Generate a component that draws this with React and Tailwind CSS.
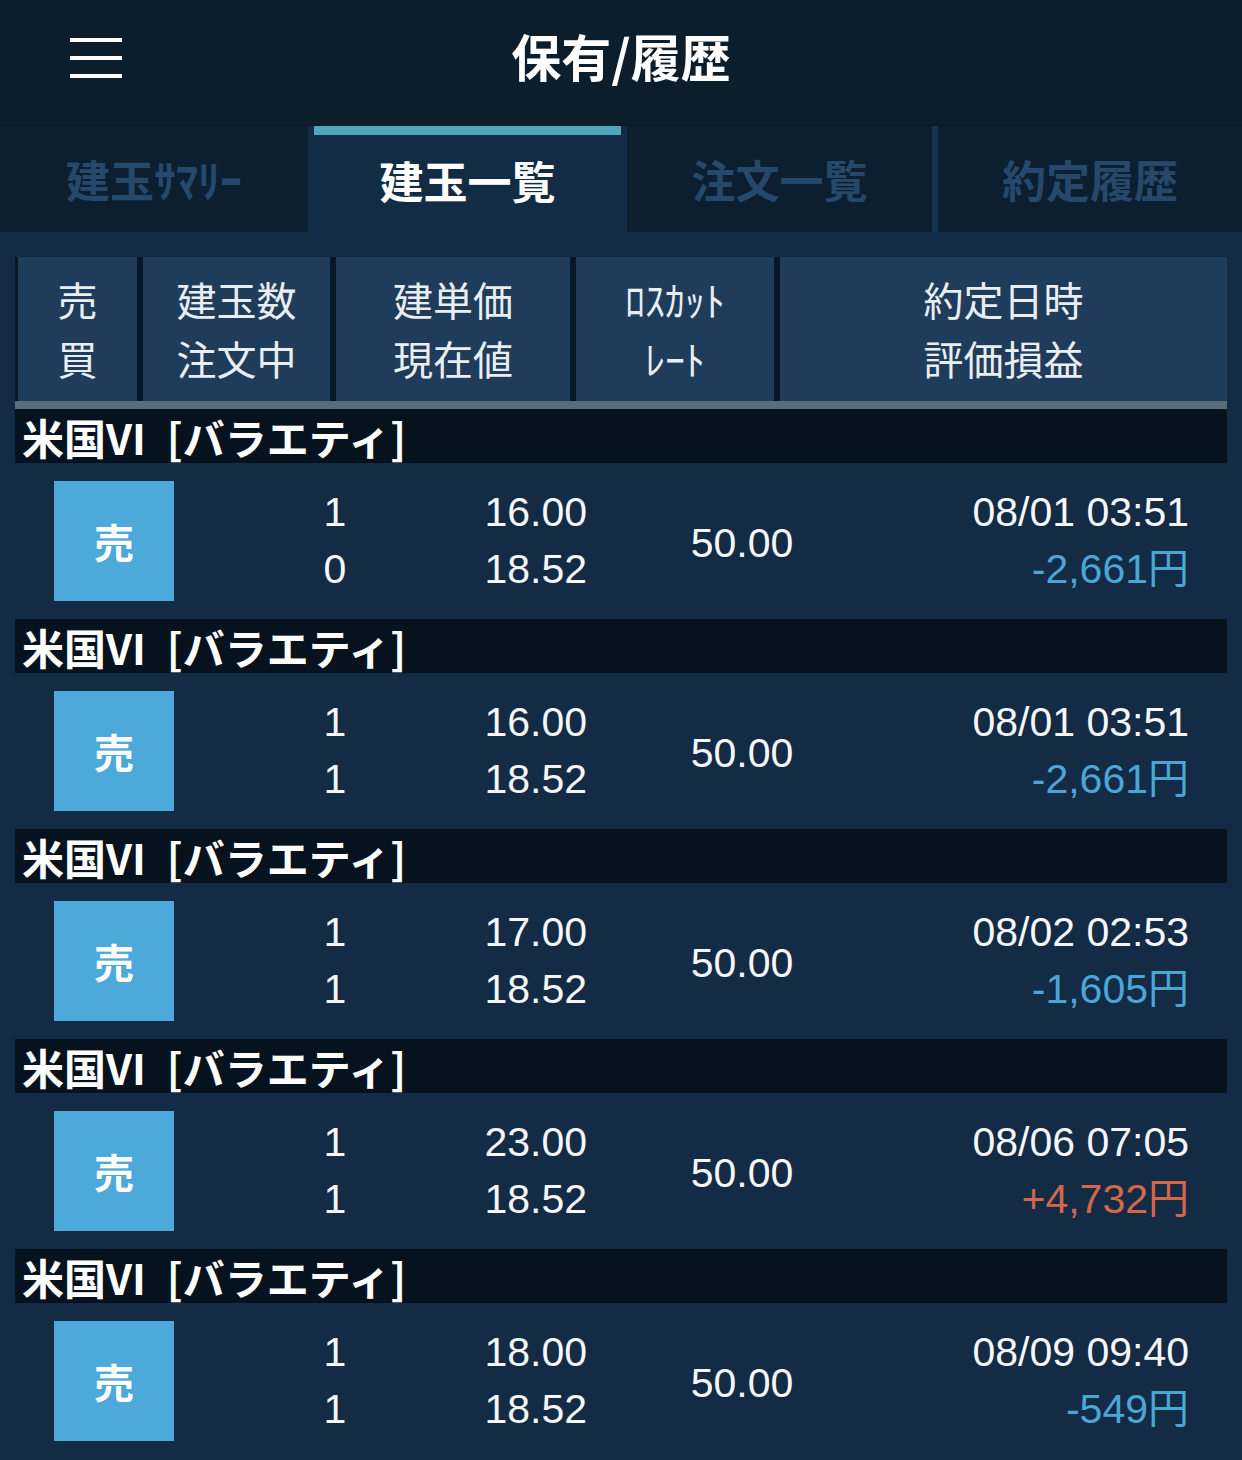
const ROWS = [
  { qty: '1', pending: '0', open: '16.00', now: '18.52', cut: '50.00', date: '08/01 03:51', pl: '-2,661円' },
  { qty: '1', pending: '1', open: '16.00', now: '18.52', cut: '50.00', date: '08/01 03:51', pl: '-2,661円' },
  { qty: '1', pending: '1', open: '17.00', now: '18.52', cut: '50.00', date: '08/02 02:53', pl: '-1,605円' },
  { qty: '1', pending: '1', open: '23.00', now: '18.52', cut: '50.00', date: '08/06 07:05', pl: '+4,732円' },
  { qty: '1', pending: '1', open: '18.00', now: '18.52', cut: '50.00', date: '08/09 09:40', pl: '-549円' },
]

const TABS = ['建玉ｻﾏﾘｰ', '建玉一覧', '注文一覧', '約定履歴']

function Tabs() {
  return (
    <div className="flex h-[106px] bg-[#132c46]">
      <div className="w-[308px] bg-[#0b1f30] flex items-center justify-center text-[44px] font-bold text-[#26496b]">
        {TABS[0]}
      </div>
      <div className="w-[319px] flex flex-col">
        <div className="mx-[6px] h-[9px] bg-[#50a6bf]" />
        <div className="flex-1 flex items-center justify-center text-[44px] font-bold text-white pb-[8px]">
          {TABS[1]}
        </div>
      </div>
      <div className="w-[305px] bg-[#0b1f30] flex items-center justify-center text-[44px] font-bold text-[#26496b]">
        {TABS[2]}
      </div>
      <div className="w-[6px] bg-[#15324f]" />
      <div className="flex-1 bg-[#0b1f30] flex items-center justify-center text-[44px] font-bold text-[#26496b]">
        {TABS[3]}
      </div>
    </div>
  )
}

function HeadCell({ top, bottom, className }) {
  return (
    <div className={`bg-[#1f3d5b] flex flex-col items-center justify-center text-[40px] leading-[59px] text-[#e9eef3] ${className}`}>
      <span>{top}</span>
      <span>{bottom}</span>
    </div>
  )
}

function Row({ row }) {
  const plColor = row.pl.startsWith('+') ? 'text-[#d4674a]' : 'text-[#4ba6d8]'
  return (
    <div>
      <div className="h-[54px] bg-[#06121e] pl-[7px] flex items-center text-[42px] font-bold text-white">
        <span>米国VI</span>
        <span className="ml-[21px]">[バラエティ]</span>
      </div>
      <div className="h-[156px] flex items-center text-[41px] text-[#f5f7fa] font-[family-name:'Liberation_Sans','Noto_Sans_CJK_JP',sans-serif]">
        <div className="ml-[39px] w-[120px] h-[120px] bg-[#4ea9db] flex items-center justify-center text-[40px] font-bold text-white font-[family-name:'Noto_Sans_CJK_JP',sans-serif] mb-[1px]">
          売
        </div>
        <div className="ml-[101px] w-[120px] flex flex-col items-center leading-[57px]">
          <span>{row.qty}</span>
          <span>{row.pending}</span>
        </div>
        <div className="w-[192px] flex flex-col items-end leading-[57px]">
          <span>{row.open}</span>
          <span>{row.now}</span>
        </div>
        <div className="w-[310px] text-center pt-[6px]">{row.cut}</div>
        <div className="w-[292px] flex flex-col items-end leading-[57px]">
          <span>{row.date}</span>
          <span className={plColor}>{row.pl}</span>
        </div>
      </div>
    </div>
  )
}

export default function App() {
  return (
    <div className="w-[1242px] h-[1460px] overflow-hidden bg-[#132b45] font-[family-name:'Noto_Sans_CJK_JP',sans-serif]">
      <div className="h-[126px] bg-[#0c1d2c] border-b border-[#081520] flex items-center relative">
        <div className="absolute left-[70px] top-[38px] flex flex-col gap-[14px]">
          <div className="w-[52px] h-[4px] bg-white" />
          <div className="w-[52px] h-[4px] bg-white" />
          <div className="w-[52px] h-[4px] bg-white" />
        </div>
        <div className="flex-1 text-center text-[50px] font-bold text-white pb-[14px]">保有/履歴</div>
      </div>
      <Tabs />
      <div className="px-[15px] pt-[25px]">
        <div className="flex h-[152px] bg-[#0a1826] pl-[3px] gap-[6px] border-b-[8px] border-[#5b6c7b]">
          <HeadCell top="売" bottom="買" className="w-[119px]" />
          <HeadCell top="建玉数" bottom="注文中" className="w-[187px]" />
          <HeadCell top="建単価" bottom="現在値" className="w-[234px]" />
          <HeadCell top="ﾛｽｶｯﾄ" bottom="ﾚｰﾄ" className="w-[198px]" />
          <HeadCell top="約定日時" bottom="評価損益" className="flex-1" />
        </div>
        {ROWS.map((row, i) => (
          <Row key={i} row={row} />
        ))}
      </div>
    </div>
  )
}
